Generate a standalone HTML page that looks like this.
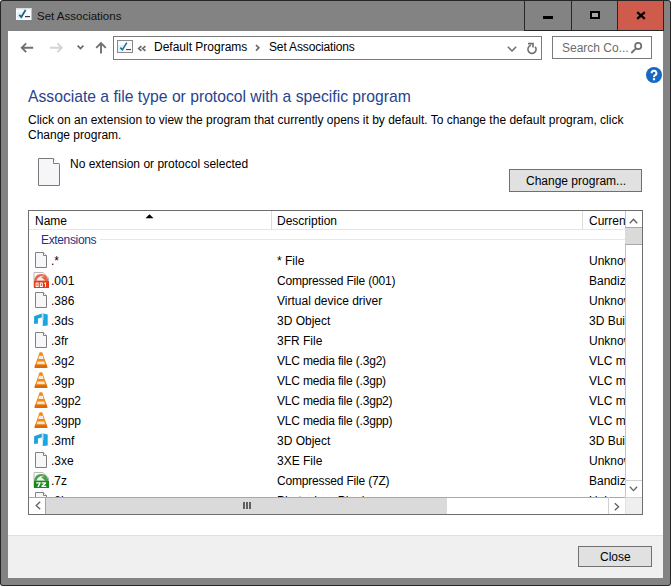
<!DOCTYPE html>
<html><head><meta charset="utf-8">
<style>
*{margin:0;padding:0;box-sizing:border-box}
html,body{width:671px;height:586px;overflow:hidden;background:#fff}
body{font-family:"Liberation Sans",sans-serif;font-size:12px;color:#000;position:relative}
.a{position:absolute;white-space:nowrap}
#win{position:absolute;left:0;top:0;width:671px;height:586px;background:#262626;border-radius:3px}
#frame{position:absolute;left:1px;top:1px;width:669px;height:584px;background:#838383;border-radius:2px}
#content{position:absolute;left:8px;top:31px;width:655px;height:547px;background:#fff;overflow:hidden}
.tb{position:absolute;top:0;height:31px;border:1px solid #262626;background:#838383}
.t{line-height:15px}
</style></head><body>
<div id="win"></div>
<div id="frame"></div>

<!-- title bar -->
<svg class="a" style="left:16px;top:8px" width="16" height="12" viewBox="0 0 16 12">
 <rect x="0" y="0" width="15.5" height="12" fill="#fafdff"/>
 <rect x="0" y="0" width="15.5" height="1.5" fill="#d8dde2"/>
 <rect x="1" y="4" width="6" height="7" fill="#e2f4fb"/>
 <path d="M3.2 6.8 L5.3 9 L9.6 2" fill="none" stroke="#22607f" stroke-width="1.7"/>
 <rect x="9" y="8" width="5" height="1.2" fill="#3a3a3a"/>
</svg>
<div class="a t" style="left:37px;top:9px;font-size:11.5px;color:#111">Set Associations</div>
<div class="tb" style="left:524px;width:48px;border-right:none"></div>
<div class="tb" style="left:571px;width:47px;border-right:none"></div>
<div class="tb" style="left:617px;width:47px;background:#cf5b4d"></div>
<div class="a" style="left:543px;top:16px;width:10px;height:3px;background:#000"></div>
<div class="a" style="left:590px;top:11px;width:10px;height:8px;border:2px solid #000;background:#a6a6a6"></div>
<svg class="a" style="left:636px;top:11px" width="10" height="9" viewBox="0 0 10 9">
 <path d="M1.2 1.2 L8.8 7.8 M8.8 1.2 L1.2 7.8" stroke="#000" stroke-width="2.2"/>
</svg>

<div id="content"></div>
<!-- bottom panel -->
<div class="a" style="left:8px;top:535px;width:655px;height:1px;background:#dfdfdf"></div>
<div class="a" style="left:8px;top:536px;width:655px;height:42px;background:#f0f0f0"></div>

<!-- nav -->
<svg class="a" style="left:20px;top:42px" width="14" height="12" viewBox="0 0 14 12">
 <path d="M13.2 5.7 H2 M6.2 1.3 L1.8 5.7 L6.2 10.1" fill="none" stroke="#707070" stroke-width="1.9"/>
</svg>
<svg class="a" style="left:49px;top:42px" width="15" height="12" viewBox="0 0 15 12">
 <path d="M1 5.7 H12.5 M8.4 1.3 L12.8 5.7 L8.4 10.1" fill="none" stroke="#d4d4d4" stroke-width="1.9"/>
</svg>
<svg class="a" style="left:77px;top:45px" width="7" height="5" viewBox="0 0 7 5">
 <path d="M0.6 0.7 L3.5 3.6 L6.4 0.7" fill="none" stroke="#6a6a6a" stroke-width="1.8"/>
</svg>
<svg class="a" style="left:95px;top:41px" width="12" height="13" viewBox="0 0 12 13">
 <path d="M6 12.6 V2.5 M1.2 6.8 L6 2 L10.8 6.8" fill="none" stroke="#707070" stroke-width="1.9"/>
</svg>

<!-- address -->
<div class="a" style="left:113px;top:36px;width:429px;height:24px;border:1px solid #7a7a7a;background:#fff"></div>
<svg class="a" style="left:117px;top:40px" width="16" height="13" viewBox="0 0 16 13">
 <rect x="0.5" y="0.5" width="15" height="12" fill="#f6fbfe" stroke="#8a8a8a"/>
 <rect x="1" y="5" width="6" height="7" fill="#e2f3fa"/>
 <path d="M3.3 7.6 L5.4 9.8 L9.8 2.6" fill="none" stroke="#2a6c95" stroke-width="1.6"/>
 <rect x="9" y="9" width="5" height="1.1" fill="#4a4a4a"/>
</svg>
<svg class="a" style="left:137px;top:45px" width="10" height="7" viewBox="0 0 10 7">
 <path d="M4.4 1.1 L1.7 3.5 L4.4 5.9 M8.4 1.1 L5.7 3.5 L8.4 5.9" fill="none" stroke="#6a6a6a" stroke-width="1.7"/>
</svg>
<div class="a t" style="left:154px;top:40px">Default Programs</div>
<svg class="a" style="left:255px;top:44px" width="5" height="8" viewBox="0 0 5 8">
 <path d="M1 1 L3.8 3.8 L1 6.6" fill="none" stroke="#6a6a6a" stroke-width="1.7"/>
</svg>
<div class="a t" style="left:269px;top:40px;letter-spacing:-0.15px">Set Associations</div>
<svg class="a" style="left:507px;top:46px" width="10" height="6" viewBox="0 0 10 6">
 <path d="M0.8 0.8 L5 5 L9.2 0.8" fill="none" stroke="#6e6e6e" stroke-width="1.5"/>
</svg>
<svg class="a" style="left:526px;top:42px" width="12" height="13" viewBox="0 0 12 13">
 <path d="M4.94 3.34 A4.1 4.1 0 1 0 9.14 4.66" fill="none" stroke="#6e6e6e" stroke-width="1.6"/>
 <path d="M2 1.6 H7 V5.6" fill="none" stroke="#6e6e6e" stroke-width="1.6"/>
</svg>

<!-- search -->
<div class="a" style="left:552px;top:36px;width:100px;height:23px;border:1px solid #7a7a7a;background:#fff"></div>
<div class="a t" style="left:562px;top:41px;color:#6d6d6d">Search Co...</div>
<svg class="a" style="left:630px;top:41px" width="13" height="13" viewBox="0 0 13 13">
 <circle cx="8.2" cy="5" r="3.1" fill="none" stroke="#6e6e6e" stroke-width="1.7"/>
 <path d="M6 7.3 L1.3 12" stroke="#6e6e6e" stroke-width="1.8"/>
</svg>

<!-- help -->
<svg class="a" style="left:646px;top:67px" width="16" height="16" viewBox="0 0 16 16">
 <circle cx="8" cy="8" r="8" fill="#1768c2"/>
 <path d="M5.6 6.2 A2.4 2.4 0 1 1 9.1 8.2 Q8 8.9 8 10.2" fill="none" stroke="#fff" stroke-width="2"/>
 <rect x="6.9" y="11.2" width="2.2" height="2.1" fill="#fff"/>
</svg>

<!-- heading & description -->
<div class="a" style="left:28px;top:87px;font-size:15.7px;line-height:19px;color:#27438e">Associate a file type or protocol with a specific program</div>
<div class="a t" style="left:28px;top:113px">Click on an extension to view the program that currently opens it by default. To change the default program, click</div>
<div class="a t" style="left:28px;top:128px">Change program.</div>

<!-- selected file -->
<svg class="a" style="left:38px;top:158px" width="22" height="28" viewBox="0 0 22 28">
 <path d="M0.5 0.5 H15.5 L21.5 6.5 V27.5 H0.5 Z" fill="#f6f6f8" stroke="#7a7a7a"/>
 <path d="M15.5 0.5 V5.5 H21.5" fill="#fff" stroke="#7a7a7a"/>
</svg>
<div class="a t" style="left:70px;top:157px">No extension or protocol selected</div>

<!-- change program button -->
<div class="a" style="left:509px;top:169px;width:133px;height:23px;border:1px solid #707070;background:#e1e1e1"></div>
<div class="a t" style="left:526px;top:174px">Change program...</div>

<!-- list view -->
<div class="a" style="left:28px;top:210px;width:615px;height:305px;border:1px solid #6e6e6e;background:#fff"></div>
<div class="a" style="left:29px;top:211px;width:596px;height:286px;overflow:hidden">
 <div class="a" style="left:242px;top:0;width:1px;height:18px;background:#dcdcdc"></div>
 <div class="a" style="left:553px;top:0;width:1px;height:18px;background:#dcdcdc"></div>
 <div class="a" style="left:0;top:18px;width:596px;height:1px;background:#e5e5e5"></div>
 <div class="a t" style="left:6px;top:3px">Name</div>
 <svg class="a" style="left:116px;top:3px" width="9" height="5" viewBox="0 0 9 5"><path d="M0.5 4.2 L4.5 0.2 L8.5 4.2 Z" fill="#000"/></svg>
 <div class="a t" style="left:248px;top:3px">Description</div>
 <div class="a t" style="left:560px;top:3px">Current Default</div>
 <div class="a t" style="left:12px;top:22px;color:#1e3287;letter-spacing:-0.35px">Extensions</div>
 <div class="a" style="left:71px;top:28px;width:525px;height:1px;background:#e2e9f1"></div>
<svg class="a" style="left:4px;top:41px" width="16" height="16"><use href="#ic-blank"/></svg>
<div class="a t" style="left:22px;top:43px">.*</div>
<div class="a t" style="left:248px;top:43px">* File</div>
<div class="a t" style="left:560px;top:43px">Unknown</div>
<svg class="a" style="left:4px;top:61px" width="16" height="16"><use href="#ic-001"/></svg>
<div class="a t" style="left:22px;top:63px">.001</div>
<div class="a t" style="left:248px;top:63px;letter-spacing:-0.18px">Compressed File (001)</div>
<div class="a t" style="left:560px;top:63px">Bandizip</div>
<svg class="a" style="left:4px;top:81px" width="16" height="16"><use href="#ic-blank"/></svg>
<div class="a t" style="left:22px;top:83px">.386</div>
<div class="a t" style="left:248px;top:83px">Virtual device driver</div>
<div class="a t" style="left:560px;top:83px">Unknown</div>
<svg class="a" style="left:4px;top:101px" width="16" height="16"><use href="#ic-3d"/></svg>
<div class="a t" style="left:22px;top:103px">.3ds</div>
<div class="a t" style="left:248px;top:103px">3D Object</div>
<div class="a t" style="left:560px;top:103px">3D Builder</div>
<svg class="a" style="left:4px;top:121px" width="16" height="16"><use href="#ic-blank"/></svg>
<div class="a t" style="left:22px;top:123px">.3fr</div>
<div class="a t" style="left:248px;top:123px">3FR File</div>
<div class="a t" style="left:560px;top:123px">Unknown</div>
<svg class="a" style="left:4px;top:141px" width="16" height="16"><use href="#ic-vlc"/></svg>
<div class="a t" style="left:22px;top:143px">.3g2</div>
<div class="a t" style="left:248px;top:143px;letter-spacing:-0.18px">VLC media file (.3g2)</div>
<div class="a t" style="left:560px;top:143px">VLC media player</div>
<svg class="a" style="left:4px;top:161px" width="16" height="16"><use href="#ic-vlc"/></svg>
<div class="a t" style="left:22px;top:163px">.3gp</div>
<div class="a t" style="left:248px;top:163px;letter-spacing:-0.18px">VLC media file (.3gp)</div>
<div class="a t" style="left:560px;top:163px">VLC media player</div>
<svg class="a" style="left:4px;top:181px" width="16" height="16"><use href="#ic-vlc"/></svg>
<div class="a t" style="left:22px;top:183px">.3gp2</div>
<div class="a t" style="left:248px;top:183px;letter-spacing:-0.18px">VLC media file (.3gp2)</div>
<div class="a t" style="left:560px;top:183px">VLC media player</div>
<svg class="a" style="left:4px;top:201px" width="16" height="16"><use href="#ic-vlc"/></svg>
<div class="a t" style="left:22px;top:203px">.3gpp</div>
<div class="a t" style="left:248px;top:203px;letter-spacing:-0.18px">VLC media file (.3gpp)</div>
<div class="a t" style="left:560px;top:203px">VLC media player</div>
<svg class="a" style="left:4px;top:221px" width="16" height="16"><use href="#ic-3d"/></svg>
<div class="a t" style="left:22px;top:223px">.3mf</div>
<div class="a t" style="left:248px;top:223px">3D Object</div>
<div class="a t" style="left:560px;top:223px">3D Builder</div>
<svg class="a" style="left:4px;top:241px" width="16" height="16"><use href="#ic-blank"/></svg>
<div class="a t" style="left:22px;top:243px">.3xe</div>
<div class="a t" style="left:248px;top:243px">3XE File</div>
<div class="a t" style="left:560px;top:243px">Unknown</div>
<svg class="a" style="left:4px;top:261px" width="16" height="16"><use href="#ic-7z"/></svg>
<div class="a t" style="left:22px;top:263px">.7z</div>
<div class="a t" style="left:248px;top:263px;letter-spacing:-0.18px">Compressed File (7Z)</div>
<div class="a t" style="left:560px;top:263px">Bandizip</div>
<svg class="a" style="left:4px;top:281px" width="16" height="16"><use href="#ic-blank"/></svg>
<div class="a t" style="left:22px;top:283px">.8ba</div>
<div class="a t" style="left:248px;top:283px">Photoshop Plugin</div>
<div class="a t" style="left:560px;top:283px">Unknown</div>
</div>
<!-- vertical scrollbar -->
<div class="a" style="left:625px;top:211px;width:17px;height:286px;background:#fff;border-left:1px solid #c4c4c4"></div>
<div class="a" style="left:625px;top:227px;width:17px;height:18px;background:#dadada;border-top:1px solid #a8a8a8;border-bottom:1px solid #a8a8a8"></div>
<div class="a" style="left:625px;top:480px;width:17px;height:1px;background:#d0d0d0"></div>
<svg class="a" style="left:629px;top:218px" width="9" height="6" viewBox="0 0 9 6"><path d="M0.8 5.2 L4.5 1.2 L8.2 5.2" fill="none" stroke="#606060" stroke-width="1.3"/></svg>
<svg class="a" style="left:629px;top:486px" width="9" height="6" viewBox="0 0 9 6"><path d="M0.9 0.8 L4.5 4.6 L8.1 0.8" fill="none" stroke="#606060" stroke-width="1.3"/></svg>
<!-- horizontal scrollbar -->
<div class="a" style="left:29px;top:497px;width:613px;height:17px;background:#fff;border-top:1px solid #a8a8a8"></div>
<div class="a" style="left:46px;top:497px;width:401px;height:17px;background:#dadada;border-top:1px solid #a8a8a8"></div>
<div class="a" style="left:45px;top:497px;width:1px;height:17px;background:#a4a4a4"></div>
<div class="a" style="left:608px;top:497px;width:1px;height:17px;background:#d0d0d0"></div>
<div class="a" style="left:625px;top:497px;width:17px;height:17px;background:#efefef;border-left:1px solid #e3e3e3;border-top:1px solid #d0d0d0"></div>
<svg class="a" style="left:35px;top:501px" width="6" height="9" viewBox="0 0 6 9"><path d="M5.2 0.8 L1.2 4.5 L5.2 8.2" fill="none" stroke="#606060" stroke-width="1.3"/></svg>
<svg class="a" style="left:614px;top:502px" width="6" height="9" viewBox="0 0 6 9"><path d="M0.8 1.2 L4.6 4.7 L0.8 8.2" fill="none" stroke="#606060" stroke-width="1.3"/></svg>
<div class="a" style="left:243px;top:502px;width:2px;height:7px;background:#606060"></div>
<div class="a" style="left:246px;top:502px;width:2px;height:7px;background:#606060"></div>
<div class="a" style="left:249px;top:502px;width:2px;height:7px;background:#606060"></div>

<!-- close button -->
<div class="a" style="left:578px;top:546px;width:74px;height:21px;border:1px solid #707070;background:#e1e1e1"></div>
<div class="a t" style="left:600px;top:550px">Close</div>

<svg width="0" height="0" style="position:absolute">
 <defs>
  <g id="ic-blank">
   <path d="M2.5 0.5 H10.5 L13.5 3.5 V15.5 H2.5 Z" fill="#f7f7f9" stroke="#808080"/>
   <path d="M10.5 0.5 V3.5 H13.5" fill="#fff" stroke="#808080"/>
  </g>
  <g id="ic-001">
   <path d="M1 0.5 H10 L15.5 6 V15.5 H1 Z" fill="#fff" stroke="#b8b8b8"/>
   <path d="M1.2 10 Q1.2 2 8.2 2 Q15.2 2 15.2 10 Z" fill="#e8674c"/>
   <path d="M3.5 8.5 Q6 3 11.5 4 L8 5 L12 8.5 Z" fill="#fbeee9"/>
   <rect x="1" y="9" width="15" height="7" fill="#e33c18"/>
   <path d="M2.6 10.4 H5.6 V15 H2.6 Z M3.6 11.4 V14 H4.6 V11.4 Z M6.8 10.4 H9.8 V15 H6.8 Z M7.8 11.4 V14 H8.8 V11.4 Z M11.6 10.4 H13 V15 H12 V11.8 H11 Z" fill="#fff" fill-rule="evenodd"/>
  </g>
  <g id="ic-3d">
   <path d="M1.1 4.2 L8.8 1.4 V5.6 L4.9 6.4 V11.4 L1.1 12 Z" fill="#1ba1db"/>
   <path d="M9.8 1.4 L14.7 2.4 V13.4 L9.8 14 Z" fill="#1aa6e0"/>
   <path d="M9.8 1.4 L11 1.6 V8 L9.8 8.2 Z" fill="#5cc8f0"/>
  </g>
  <g id="ic-vlc">
   <path d="M6.6 0.3 H9.2 L14 13.5 H1.9 Z" fill="#ef8a18"/>
   <path d="M6 3.8 H9.8 L10.6 6.9 H5.2 Z" fill="#f4ece4"/>
   <path d="M4.6 9.4 H11.2 L12 12.2 H3.8 Z" fill="#f1e4d4"/>
   <path d="M1.9 12.8 H14 L14.3 15.7 H1.6 Z" fill="#e36f08"/>
   <rect x="1.6" y="14.7" width="12.7" height="1" fill="#c85a00"/>
  </g>
  <g id="ic-7z">
   <path d="M1 0.5 H10 L15.5 6 V15.5 H1 Z" fill="#fff" stroke="#b8b8b8"/>
   <path d="M1.2 10 Q1.2 2 8.2 2 Q15.2 2 15.2 10 Z" fill="#48a048"/>
   <path d="M3.5 8.5 Q6 3 11.5 4 L8 5 L12 8.5 Z" fill="#f2faf2"/>
   <rect x="1" y="9" width="15" height="7" fill="#178a17"/>
   <path d="M3.2 10.3 H7.6 V11.6 L5.8 15 H4.2 L5.9 11.6 H3.2 Z M8.6 10.3 H13.2 V11.6 L10.6 13.8 H13.3 V15 H8.4 V13.8 L11 11.6 H8.6 Z" fill="#fff"/>
  </g>
 </defs>
</svg>

</body></html>
